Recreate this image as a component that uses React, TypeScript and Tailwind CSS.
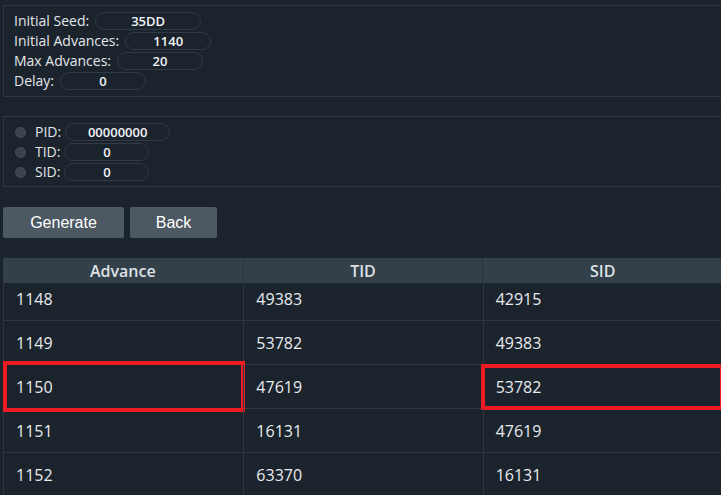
import React from "react";

const font = { fontFamily: '"Open Sans", "DejaVu Sans", sans-serif' };

function Field({ label, value, w }: { label: string; value: string; w: string }) {
  return (
    <div className="flex h-[20px] items-center">
      <span className="text-[14px] leading-none text-[#e3e7ea]">{label}</span>
      <div
        className={`ml-[6px] flex h-[18px] items-center justify-center rounded-full border border-[#2f3b46] text-[13px] font-semibold leading-none text-[#f2f4f6] ${w}`}
      >
        {value}
      </div>
    </div>
  );
}

function RadioField({ label, value, w }: { label: string; value: string; w: string }) {
  return (
    <div className="flex h-[20px] items-center">
      <span className="ml-[11px] mr-[9px] h-[11px] w-[11px] rounded-full border border-[#46505a] bg-[#3a434d]" />
      <span className="text-[14px] leading-none text-[#e3e7ea]">{label}</span>
      <div
        className={`ml-[4px] flex h-[18px] items-center justify-center rounded-full border border-[#2f3b46] text-[13px] font-semibold leading-none text-[#f2f4f6] ${w}`}
      >
        {value}
      </div>
    </div>
  );
}

const rows = [
  ["1148", "49383", "42915"],
  ["1149", "53782", "49383"],
  ["1150", "47619", "53782"],
  ["1151", "16131", "47619"],
  ["1152", "63370", "16131"],
];

export default function App() {
  return (
    <div className="h-[495px] w-full overflow-hidden bg-[#1b232d] pl-[3px] pt-[5px]" style={font}>
      <div className="w-[730px] border border-[#2c3741] pb-[5px] pl-[10px] pt-[5px]">
        <Field label="Initial Seed:" value="35DD" w="w-[106px]" />
        <Field label="Initial Advances:" value="1140" w="w-[86px]" />
        <Field label="Max Advances:" value="20" w="w-[86px]" />
        <Field label="Delay:" value="0" w="w-[86px]" />
      </div>

      <div className="mt-[19px] w-[730px] border border-[#2c3741] pb-[4px] pt-[5px]">
        <RadioField label="PID:" value="00000000" w="w-[105px]" />
        <RadioField label="TID:" value="0" w="w-[85px]" />
        <RadioField label="SID:" value="0" w="w-[85px]" />
      </div>

      <div className="mt-[20px] flex gap-[6px]" style={{ fontFamily: '"Liberation Sans", Arial, sans-serif' }}>
        <button className="h-[31px] w-[121px] rounded-[2px] bg-[#4c5862] text-[16px] text-white">Generate</button>
        <button className="h-[31px] w-[87px] rounded-[2px] bg-[#4c5862] text-[16px] text-white">Back</button>
      </div>

      <div className="mt-[20px] w-[719px]">
        <div className="grid h-[25px] grid-cols-3 bg-[#333f49]">
          {["Advance", "TID", "SID"].map((h, i) => (
            <div
              key={h}
              className={`flex items-center justify-center text-[16px] font-semibold text-[#dce1e5] ${i > 0 ? "border-l border-[#2a343e]" : ""}`}
            >
              {h}
            </div>
          ))}
        </div>
        {rows.map((r, ri) => (
          <div
            key={ri}
            className={`grid grid-cols-3 border-b border-l border-[#2c3741] ${ri === 0 ? "h-[38px]" : "h-[44px]"}`}
          >
            {r.map((c, ci) => (
              <div
                key={ci}
                className={`relative flex items-center pl-[12px] text-[16px] text-[#e8ebee] ${ri === 0 ? "pb-[6px]" : ""} ${ci > 0 ? "border-l border-[#2c3741]" : ""}`}
              >
                {c}
                {ri === 2 && ci === 0 && (
                  <div className="absolute left-[-1px] right-[-2px] top-[-4px] bottom-[-4px] border-[4px] border-[#ed1c24]" />
                )}
                {ri === 2 && ci === 2 && (
                  <div className="absolute left-[-3px] right-[-2px] top-[-1px] bottom-[-2px] border-[4px] border-[#ed1c24]" />
                )}
              </div>
            ))}
          </div>
        ))}
      </div>
    </div>
  );
}
